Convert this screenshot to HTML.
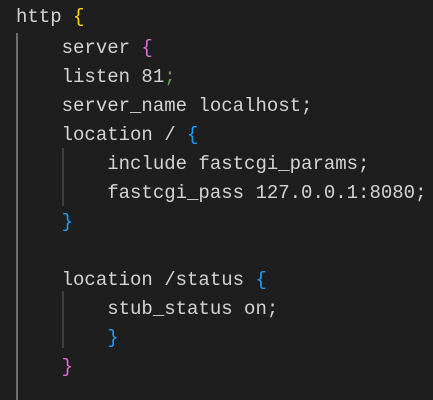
<!DOCTYPE html>
<html><head><style>
html,body{margin:0;padding:0;background:#1e1e1e;width:433px;height:400px;overflow:hidden}
.l{position:absolute;left:16px;height:29px;line-height:29px;font-family:"Liberation Mono",monospace;font-size:19px;color:#d4d4d4;white-space:pre}
.y{color:#ffd700}.p{color:#da70d6}.b{color:#179fff}.g{color:#6a9955}
.gd{position:absolute;width:2px;background:#404040}
</style></head><body>
<div class="gd" style="left:16px;top:33px;height:367px;background:#6e6e6e"></div>
<div class="gd" style="left:62px;top:148px;height:58px"></div>
<div class="gd" style="left:62px;top:291px;height:57px"></div>
<div class="l" style="top:3px">http <span class="y">{</span></div>
<div class="l" style="top:34px">    server <span class="p">{</span></div>
<div class="l" style="top:63px">    listen 81<span class="g">;</span></div>
<div class="l" style="top:92px">    server_name localhost;</div>
<div class="l" style="top:121px">    location / <span class="b">{</span></div>
<div class="l" style="top:150px">        include fastcgi_params;</div>
<div class="l" style="top:179px">        fastcgi_pass 127.0.0.1:8080;</div>
<div class="l" style="top:208px">    <span class="b">}</span></div>
<div class="l" style="top:266px">    location /status <span class="b">{</span></div>
<div class="l" style="top:295px">        stub_status on;</div>
<div class="l" style="top:324px">        <span class="b">}</span></div>
<div class="l" style="top:353px">    <span class="p">}</span></div>
</body></html>
